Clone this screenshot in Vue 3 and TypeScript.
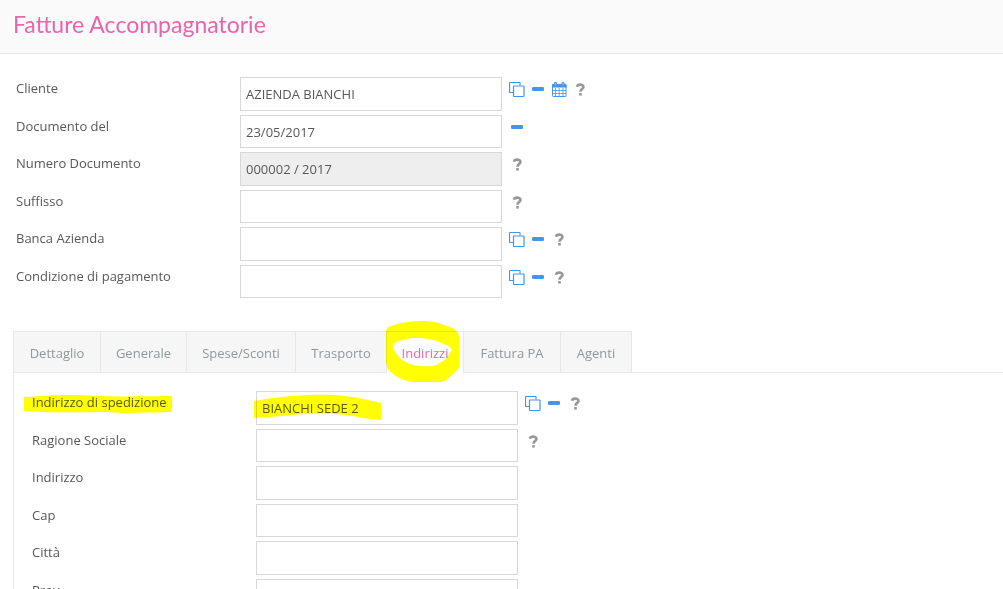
<script setup lang="ts">
import { ref } from 'vue'

type IconName = 'copy' | 'minus' | 'calendar' | 'help'

interface Field {
  id: string
  label: string
  value: string
  icons: IconName[]
  readonly?: boolean
  marked?: boolean
}

const titles: Record<IconName, string> = {
  copy: 'Seleziona',
  minus: 'Rimuovi',
  calendar: 'Calendario',
  help: 'Aiuto',
}

const header = ref<Field[]>([
  { id: 'cliente', label: 'Cliente', value: 'AZIENDA BIANCHI', icons: ['copy', 'minus', 'calendar', 'help'] },
  { id: 'data', label: 'Documento del', value: '23/05/2017', icons: ['minus'] },
  { id: 'numero', label: 'Numero Documento', value: '000002 / 2017', icons: ['help'], readonly: true },
  { id: 'suffisso', label: 'Suffisso', value: '', icons: ['help'] },
  { id: 'banca', label: 'Banca Azienda', value: '', icons: ['copy', 'minus', 'help'] },
  { id: 'pagamento', label: 'Condizione di pagamento', value: '', icons: ['copy', 'minus', 'help'] },
])

const address = ref<Field[]>([
  { id: 'spedizione', label: 'Indirizzo di spedizione', value: 'BIANCHI SEDE 2', icons: ['copy', 'minus', 'help'], marked: true },
  { id: 'ragione', label: 'Ragione Sociale', value: '', icons: ['help'] },
  { id: 'indirizzo', label: 'Indirizzo', value: '', icons: [] },
  { id: 'cap', label: 'Cap', value: '', icons: [] },
  { id: 'citta', label: 'Città', value: '', icons: [] },
  { id: 'prov', label: 'Prov', value: '', icons: [] },
])

const groups = [
  { name: 'documento', fields: header },
  { name: 'indirizzi', fields: address },
]

const tabs = ['Dettaglio', 'Generale', 'Spese/Sconti', 'Trasporto', 'Indirizzi', 'Fattura PA', 'Agenti']
const active = ref('Indirizzi')
</script>

<template>
  <div class="page">
    <header class="top">
      <h1>Fatture Accompagnatorie</h1>
    </header>

    <main>
      <template v-for="group in groups" :key="group.name">
        <nav v-if="group.name === 'indirizzi'" class="tabs" role="tablist">
          <button
            v-for="tab in tabs"
            :key="tab"
            type="button"
            role="tab"
            class="tab"
            :class="{ active: tab === active }"
            :aria-selected="tab === active"
            @click="active = tab"
          >
            {{ tab }}
            <svg v-if="tab === 'Indirizzi'" class="ring" width="75" height="64" viewBox="0 0 75 64" aria-hidden="true">
              <path
                fill="#ffff00"
                fill-rule="evenodd"
                d="M1 13C1 8 4 6 9 5C19 2 28 1 37 1C47 1 54 3 59 5C62 7 65 6 69 9Q74 12 74 18V47Q72 51 68 54L61 60Q57 63 45 62H28C20 61 10 57 6 52C2 49 2 46 1 42ZM8 25C10 20 15 22 20 19C29 17 43 18 48 20C55 21 57 24 62 25L67 29C67 31 65 32 63 36C60 42 53 42 52 45C46 47 39 46 34 46C24 45 18 41 14 37C10 33 8 29 8 25Z"
              />
            </svg>
          </button>
        </nav>

        <section class="form" :class="{ panel: group.name === 'indirizzi' }">
          <div v-for="field in group.fields.value" :key="field.id" class="row">
            <div class="caption">
              <label :for="field.id">{{ field.label }}</label>
              <svg v-if="field.marked" class="mark-label" width="150" height="20" viewBox="0 0 150 20" aria-hidden="true">
                <path fill="#ffff00" d="M1 3C30 1 50 0 73 2C100 3 130 2 149 2V18C125 18 105 20 84 18C55 18 25 19 1 17Z" />
              </svg>
            </div>
            <div class="control">
              <input :id="field.id" v-model="field.value" type="text" :readonly="field.readonly" />
              <svg v-if="field.marked" class="mark-value" width="129" height="26" viewBox="0 0 129 26" aria-hidden="true">
                <path fill="#ffff00" d="M1 7C23 3 55 0 80 1C100 2 116 6 128 9V26C111 25 100 21 82 20C54 18 26 23 1 24Z" />
              </svg>
            </div>
            <div class="tools">
              <button v-for="icon in field.icons" :key="icon" type="button" class="tool" :class="icon" :aria-label="titles[icon]">
                <svg width="17" height="17" viewBox="0 0 17 17" aria-hidden="true">
                  <g v-if="icon === 'copy'" fill="none" stroke="#4395ec" stroke-width="1.2">
                    <path d="M4 11.5H1Q0.5 11.5 0.5 11V2Q0.5 1.5 1 1.5H10.500Q11 1.5 11 2V4.5" />
                    <rect x="4.5" y="5" width="10.5" height="10.5" rx="0.5" />
                  </g>
                  <rect v-else-if="icon === 'minus'" x="2" y="6" width="12" height="4" rx="1.3" fill="#4395ec" />
                  <g v-else-if="icon === 'calendar'">
                    <rect x="1.5" y="3.5" width="13.500" height="12" rx="0.8" fill="#fff" stroke="#4395ec" />
                    <path fill="#4395ec" d="M1 6.500V4Q1 3 2 3H3V2Q3 1 4.500 1Q6 1 6 2V3H10.500V2Q10.500 1 12 1Q13.500 1 13.500 2V3H14.500Q15.500 3 15.500 4V6.500Z" />
                    <path d="M4.500 7V15M8.200 7V15M12 7V15M2 9.500H15M2 12.500H15" fill="none" stroke="#4395ec" stroke-width="0.8" />
                    <path d="M4.500 2V4.500M12 2V4.500" stroke="#b9d8f8" stroke-width="0.8" />
                  </g>
                  <g v-else fill="none" stroke="#999" stroke-width="2.600">
                    <path d="M5 5.800C5.300 4.300 6.600 3.600 8.200 3.600C10.200 3.600 11.500 4.500 11.500 6C11.500 8 8.500 7.900 8.500 10.700" />
                    <path d="M7.200 13.300H9.800" />
                  </g>
                </svg>
              </button>
            </div>
          </div>
        </section>
      </template>
    </main>
  </div>
</template>

<style>
body {
  margin: 0;
  background: #fff;
}
</style>

<style scoped>
.page {
  height: 100vh;
  overflow: hidden;
  color: #58585a;
  font: 13px/20px "Open Sans", "Noto Sans", sans-serif;
}
.top {
  box-sizing: border-box;
  height: 54px;
  padding: 8px 13px;
  background: #fafafa;
  border-bottom: 1px solid #e7e7e7;
}
h1 {
  margin: 0;
  color: #e965ab;
  font: 400 23px/32px Lato, sans-serif;
}
main {
  padding: 23px 0 0 13px;
}
.form {
  padding-left: 3px;
}
.row {
  display: grid;
  grid-template-columns: 224px 262px auto;
  justify-content: start;
  height: 38px;
}
.row:nth-child(even) {
  height: 37px;
}
.caption {
  position: relative;
  padding-top: 1px;
}
.control {
  position: relative;
  padding-bottom: 4px;
}
input {
  display: block;
  box-sizing: border-box;
  width: 100%;
  height: 100%;
  padding: 0 5px;
  border: 1px solid #d8d8d8;
  border-radius: 0;
  background: #fff;
  color: inherit;
  font: inherit;
  outline: 0;
}
input:read-only {
  background: #eee;
}
.tools {
  display: flex;
  padding-left: 5px;
}
.tool {
  display: grid;
  place-items: center;
  width: 21px;
  height: 24px;
  padding: 0;
  border: 0;
  background: none;
  cursor: pointer;
}
.tabs {
  display: grid;
  grid-template-columns: 87px 86px 109px 91px 77px 97px 72px;
  height: 42px;
  margin-top: 29px;
  border-bottom: 1px solid #e8e8e8;
  box-sizing: border-box;
}
.tab {
  position: relative;
  box-sizing: border-box;
  height: 42px;
  padding: 2px 0 0;
  border: 1px solid #e8e8e8;
  border-right-width: 0;
  background: #f6f6f6;
  color: #8d999f;
  font: inherit;
  white-space: nowrap;
  cursor: pointer;
}
.tab:last-child {
  border-right-width: 1px;
}
.tab.active {
  border-bottom-color: #fff;
  background: #fff;
  color: #e965ab;
}
.ring,
.mark-label,
.mark-value {
  position: absolute;
  pointer-events: none;
  mix-blend-mode: multiply;
}
.ring {
  left: -2px;
  top: -12px;
  z-index: 1;
}
.mark-label {
  left: -9px;
  top: 3px;
}
.mark-value {
  left: -3px;
  top: 3px;
}
.panel {
  padding: 18px 0 0 18px;
  border-left: 1px solid #e8e8e8;
}
</style>
